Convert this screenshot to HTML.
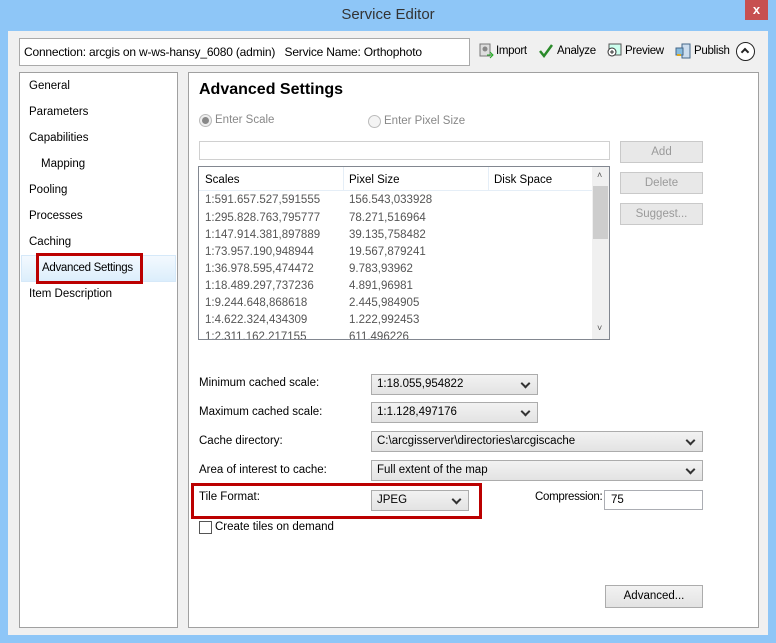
<!DOCTYPE html>
<html><head><style>
*{margin:0;padding:0;box-sizing:border-box}
body{width:776px;height:643px;background:#8ec6f7;font-family:"Liberation Sans",sans-serif;font-size:11.5px;color:#000;position:relative;overflow:hidden}
.a{position:absolute}
.t{white-space:nowrap}
.combo{position:absolute;background:linear-gradient(#f2f2f2,#e3e3e3);border:1px solid #acacac;padding:3px 0 0 5px;font-size:11.5px}
.combo:after{content:"";position:absolute;right:8px;top:5px;width:5px;height:5px;border-right:2px solid #333;border-bottom:2px solid #333;transform:rotate(45deg)}
.btn{position:absolute;background:#e8e8e8;border:1px solid #c9c9c9;color:#9a9a9a;text-align:center;padding-top:4px;font-size:11.5px}
.nav{position:absolute;left:29px;font-size:11.5px}
.row{position:absolute;font-size:11.5px;color:#555}
</style></head><body>
<div class="a t" style="left:0;top:6px;width:776px;text-align:center;font-size:15px;color:#333">Service Editor</div>
<div class="a" style="left:745px;top:0;width:23px;height:20px;background:#c75050;color:#fff;text-align:center;font-size:13px;line-height:20px;font-weight:bold">x</div>
<div class="a" style="left:8px;top:31px;width:760px;height:604px;background:#f0f0f0"></div>
<div class="a t" style="left:19px;top:38px;width:451px;height:28px;background:#fff;border:1px solid #aaa;padding:6px 0 0 4px;font-size:12px;letter-spacing:-0.2px">Connection: arcgis on w-ws-hansy_6080 (admin)&nbsp;&nbsp; Service Name: Orthophoto</div>
<svg class="a" style="left:478px;top:43px" width="16" height="16"><rect x="2" y="1" width="10" height="12" fill="#ddd" stroke="#777"/><circle cx="7" cy="6" r="2.5" fill="#888"/><path d="M9 12h6M12 9l3 3-3 3" stroke="#2a2" fill="none"/></svg>
<div class="a t" style="left:496px;top:45px;letter-spacing:-0.3px">Import</div>
<svg class="a" style="left:538px;top:43px" width="16" height="16"><path d="M2 8l4 5 8-11" stroke="#2a8a2a" stroke-width="2.5" fill="none"/></svg>
<div class="a t" style="left:557px;top:45px;letter-spacing:-0.3px">Analyze</div>
<svg class="a" style="left:606px;top:43px" width="16" height="16"><rect x="3" y="1" width="12" height="11" fill="#cfe" stroke="#555"/><circle cx="6" cy="9" r="4" fill="#fff" stroke="#333"/><path d="M4 9h4M6 7v4" stroke="#333"/></svg>
<div class="a t" style="left:625px;top:45px;letter-spacing:-0.3px">Preview</div>
<svg class="a" style="left:675px;top:43px" width="16" height="16"><rect x="7" y="1" width="8" height="14" fill="#cde" stroke="#468"/><rect x="1" y="5" width="7" height="7" fill="#8bd" stroke="#468"/><path d="M2 12h4" stroke="#da2" stroke-width="2"/></svg>
<div class="a t" style="left:694px;top:45px;letter-spacing:-0.3px">Publish</div>
<div class="a" style="left:736px;top:42px;width:19px;height:19px;border:1.5px solid #222;border-radius:50%;background:#fff"></div>
<div class="a" style="left:742px;top:49px;width:6px;height:6px;border-left:2px solid #222;border-top:2px solid #222;transform:rotate(45deg)"></div>

<div class="a" style="left:19px;top:72px;width:159px;height:556px;background:#fff;border:1px solid #a0a0a0"></div>
<div class="nav t" style="top:80px">General</div>
<div class="nav t" style="top:106px">Parameters</div>
<div class="nav t" style="top:132px">Capabilities</div>
<div class="nav t" style="top:158px;left:41px">Mapping</div>
<div class="nav t" style="top:184px">Pooling</div>
<div class="nav t" style="top:210px">Processes</div>
<div class="nav t" style="top:236px">Caching</div>
<div class="a" style="left:21px;top:255px;width:155px;height:27px;background:linear-gradient(#f3f9fe,#dceefc);border:1px solid #d6e9f9"></div>
<div class="a" style="left:36px;top:253px;width:107px;height:31px;border:3px solid #b00"></div>
<div class="nav t" style="top:262px;left:42px;letter-spacing:-0.3px">Advanced Settings</div>
<div class="nav t" style="top:288px">Item Description</div>

<div class="a" style="left:188px;top:72px;width:571px;height:556px;background:#fff;border:1px solid #a0a0a0"></div>
<div class="a t" style="left:199px;top:81px;font-size:16px;font-weight:bold">Advanced Settings</div>
<div class="a" style="left:199px;top:114px;width:13px;height:13px;border-radius:50%;border:1px solid #bbb;background:#eee"></div>
<div class="a" style="left:202px;top:117px;width:7px;height:7px;border-radius:50%;background:#888"></div>
<div class="a t" style="left:215px;top:114px;color:#888">Enter Scale</div>
<div class="a" style="left:368px;top:115px;width:13px;height:13px;border-radius:50%;border:1px solid #bbb;background:#f4f4f4"></div>
<div class="a t" style="left:384px;top:115px;color:#888">Enter Pixel Size</div>
<div class="a" style="left:199px;top:141px;width:411px;height:19px;border:1px solid #d0d0d0"></div>
<div class="btn" style="left:620px;top:141px;width:83px;height:22px">Add</div>
<div class="btn" style="left:620px;top:172px;width:83px;height:22px">Delete</div>
<div class="btn" style="left:620px;top:203px;width:83px;height:22px">Suggest...</div>

<div class="a" style="left:198px;top:166px;width:412px;height:174px;border:1px solid #828790;overflow:hidden">
<div class="a" style="left:0;top:0;width:393px;height:24px;border-bottom:1px solid #e5eef7"></div>
<div class="a" style="left:144px;top:0;height:24px;border-left:1px solid #e5eef7"></div>
<div class="a" style="left:289px;top:0;height:24px;border-left:1px solid #e5eef7"></div>
<div class="a t" style="left:6px;top:7px">Scales</div>
<div class="a t" style="left:150px;top:7px">Pixel Size</div>
<div class="a t" style="left:295px;top:7px">Disk Space</div>
<div class="a" style="left:393px;top:0;width:17px;height:172px;background:#f0f0f0"></div>
<div class="a" style="left:394px;top:19px;width:15px;height:53px;background:#cdcdcd"></div>
<div class="a t" style="left:398px;top:3px;font-size:9px;color:#555">&#x2C4;</div>
<div class="a t" style="left:398px;top:156px;font-size:9px;color:#555">&#x2C5;</div>
</div>
<div class="row t" style="left:205px;top:194px">1:591.657.527,591555</div><div class="row t" style="left:349px;top:194px">156.543,033928</div>
<div class="row t" style="left:205px;top:212px">1:295.828.763,795777</div><div class="row t" style="left:349px;top:212px">78.271,516964</div>
<div class="row t" style="left:205px;top:229px">1:147.914.381,897889</div><div class="row t" style="left:349px;top:229px">39.135,758482</div>
<div class="row t" style="left:205px;top:246px">1:73.957.190,948944</div><div class="row t" style="left:349px;top:246px">19.567,879241</div>
<div class="row t" style="left:205px;top:263px">1:36.978.595,474472</div><div class="row t" style="left:349px;top:263px">9.783,93962</div>
<div class="row t" style="left:205px;top:280px">1:18.489.297,737236</div><div class="row t" style="left:349px;top:280px">4.891,96981</div>
<div class="row t" style="left:205px;top:297px">1:9.244.648,868618</div><div class="row t" style="left:349px;top:297px">2.445,984905</div>
<div class="row t" style="left:205px;top:314px">1:4.622.324,434309</div><div class="row t" style="left:349px;top:314px">1.222,992453</div>
<div class="a" style="left:199px;top:331px;width:392px;height:8px;overflow:hidden"><div class="row t" style="left:6px;top:0">1:2.311.162,217155</div><div class="row t" style="left:150px;top:0">611,496226</div></div>

<div class="a t" style="left:199px;top:377px">Minimum cached scale:</div>
<div class="combo t" style="left:371px;top:374px;width:167px;height:21px">1:18.055,954822</div>
<div class="a t" style="left:199px;top:406px">Maximum cached scale:</div>
<div class="combo t" style="left:371px;top:402px;width:167px;height:21px">1:1.128,497176</div>
<div class="a t" style="left:199px;top:435px">Cache directory:</div>
<div class="combo t" style="left:371px;top:431px;width:332px;height:21px">C:\arcgisserver\directories\arcgiscache</div>
<div class="a t" style="left:199px;top:464px">Area of interest to cache:</div>
<div class="combo t" style="left:371px;top:460px;width:332px;height:21px">Full extent of the map</div>
<div class="a" style="left:191px;top:483px;width:291px;height:36px;border:3px solid #b00"></div>
<div class="a t" style="left:199px;top:491px">Tile Format:</div>
<div class="combo t" style="left:371px;top:490px;width:98px;height:21px">JPEG</div>
<div class="a t" style="left:535px;top:491px;letter-spacing:-0.3px">Compression:</div>
<div class="a t" style="left:604px;top:490px;width:99px;height:20px;border:1px solid #abadb3;padding:3px 0 0 6px;background:#fff">75</div>
<div class="a" style="left:199px;top:521px;width:13px;height:13px;border:1px solid #555;background:#fff"></div>
<div class="a t" style="left:215px;top:521px">Create tiles on demand</div>
<div class="a t" style="left:605px;top:585px;width:98px;height:23px;background:linear-gradient(#f2f2f2,#e3e3e3);border:1px solid #acacac;text-align:center;padding-top:4px">Advanced...</div>
</body></html>
